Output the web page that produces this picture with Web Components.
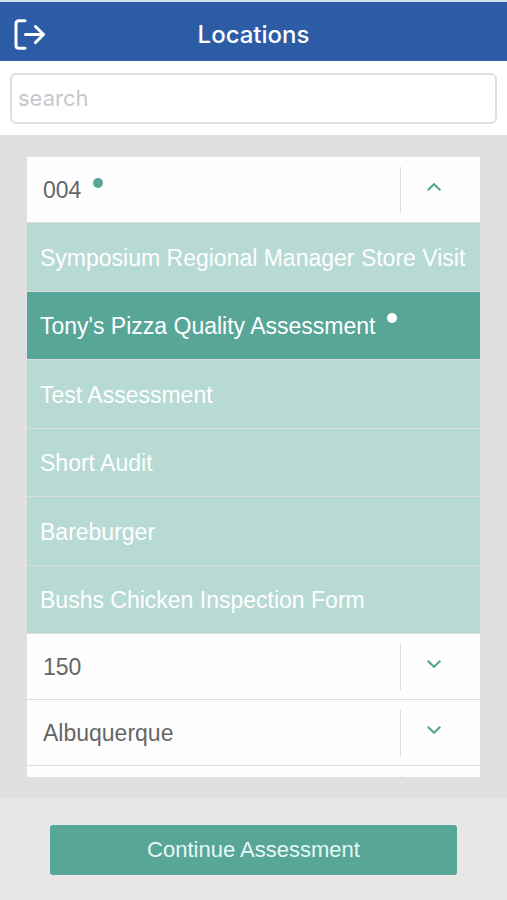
<!DOCTYPE html>
<html lang="en">
<head>
<meta charset="utf-8">
<meta name="viewport" content="width=device-width, initial-scale=1">
<title>Locations</title>
<style>
	body {
		margin: 0;
		font-family: "Liberation Sans", Arial, sans-serif;
		font-size: 23px;
		line-height: 28px;
		--green: #58a698;
		--green-light: #b7dad4;
		--line: #dcdedd;
	}
</style>
</head>
<body>
<location-page>
	<title-bar slot="header">Locations</title-bar>
	<search-box slot="search"></search-box>
	<location-list>
		<location-item open marked>
			<span slot="name">004</span>
			<assessment-item>Symposium Regional Manager Store Visit</assessment-item>
			<assessment-item selected>Tony's Pizza Quality Assessment</assessment-item>
			<assessment-item>Test Assessment</assessment-item>
			<assessment-item>Short Audit</assessment-item>
			<assessment-item>Bareburger</assessment-item>
			<assessment-item>Bushs Chicken Inspection Form</assessment-item>
		</location-item>
		<location-item><span slot="name">150</span></location-item>
		<location-item><span slot="name">Albuquerque</span></location-item>
		<location-item></location-item>
	</location-list>
	<action-button slot="footer">Continue Assessment</action-button>
</location-page>

<script>
(function() {
	function attach(element, html) {
		let template = document.createElement("template");
		template.innerHTML = html;
		let root = element.attachShadow({mode: "open"});
		root.appendChild(template.content.cloneNode(true));
		return root;
	}

	class LocationPage extends HTMLElement {
		constructor() {
			super();
			attach(this, `
				<style>
				:host {
					display: flex;
					flex-direction: column;
					height: 100vh;
					background: #e0e0e0;
				}
				main {
					flex: 1;
					min-height: 0;
					display: flex;
					flex-direction: column;
					padding: 22px 27px;
				}
				footer {
					padding: 26px 50px 25px;
					background: #e7e7e7;
				}
				</style>
				<slot name="header"></slot>
				<slot name="search"></slot>
				<main><slot></slot></main>
				<footer><slot name="footer"></slot></footer>
			`);
		}
	}

	class TitleBar extends HTMLElement {
		constructor() {
			super();
			attach(this, `
				<style>
				:host {
					display: block;
					border-top: 2px solid #d3e0f2;
					background: #2d5ca6;
					color: #fff;
				}
				header {
					display: grid;
					grid-template-columns: 60px 1fr 60px;
					align-items: center;
					padding: 15px 0 8px;
				}
				button {
					display: flex;
					padding: 0 0 0 13px;
					border: 0;
					background: none;
					color: inherit;
				}
				h1 {
					margin: 0;
					font: 500 24px/36px Inter, sans-serif;
					text-align: center;
				}
				</style>
				<header>
					<button type="button" aria-label="Log out">
						<svg width="32" height="32" viewBox="0 0 32 32" fill="none" stroke="currentColor" stroke-width="3" stroke-linecap="round" stroke-linejoin="round">
							<path d="M12 1.7H6Q3 1.7 3 4.7V26.3Q3 29.3 6 29.3H12"/>
							<path d="M12.5 15.5H30.5M22.5 7.5L30.5 15.5L22.5 23.5"/>
						</svg>
					</button>
					<h1><slot></slot></h1>
				</header>
			`);
		}
	}

	class SearchBox extends HTMLElement {
		constructor() {
			super();
			attach(this, `
				<style>
				:host {
					display: block;
					padding: 12px 10px 11px;
					background: #fff;
				}
				input {
					display: block;
					box-sizing: border-box;
					width: 100%;
					height: 51px;
					padding: 0 6px 2px;
					border: 2px solid #dedee0;
					border-radius: 6px;
					background: #fff;
					color: #666;
					font: 22px Inter, sans-serif;
				}
				input::placeholder {
					color: #c8c8cb;
					opacity: 1;
				}
				</style>
				<input type="search" placeholder="search" aria-label="search">
			`);
		}
	}

	class LocationList extends HTMLElement {
		constructor() {
			super();
			attach(this, `
				<style>
				:host {
					display: block;
					flex: 1;
					min-height: 0;
					overflow: hidden;
					background: #fefefe;
				}
				</style>
				<slot></slot>
			`);
		}
	}

	class LocationItem extends HTMLElement {
		constructor() {
			super();
			this._shadowRoot = attach(this, `
				<style>
				:host {
					display: block;
					color: #666;
				}
				.row {
					display: flex;
					align-items: center;
					box-sizing: border-box;
					height: 66px;
					padding: 0 13px 0 16px;
					border-bottom: 1px solid var(--line);
				}
				.name {
					flex: 1;
					display: flex;
				}
				.name::after {
					margin: 2px 0 0 12px;
					width: 10px;
					height: 10px;
					border-radius: 50%;
					background: var(--green);
				}
				:host([marked]) .name::after {
					content: "";
				}
				button {
					display: flex;
					align-items: center;
					justify-content: center;
					box-sizing: border-box;
					width: 67px;
					height: 46px;
					padding: 0 0 6px;
					border: 0;
					border-left: 1px solid var(--line);
					background: none;
					color: var(--green);
				}
				:host([open]) svg {
					transform: scaleY(-1);
				}
				.assessments {
					display: none;
				}
				:host([open]) .assessments {
					display: grid;
					grid-auto-rows: 1fr;
					min-height: 411px;
				}
				</style>
				<div class="row">
					<div class="name"><slot name="name"></slot></div>
					<button type="button" aria-label="Show assessments">
						<svg width="16" height="10" viewBox="0 0 16 10" fill="none" stroke="currentColor" stroke-width="2.2">
							<path d="M1.7 1.7L8 7.8L14.3 1.7"/>
						</svg>
					</button>
				</div>
				<div class="assessments"><slot></slot></div>
			`);
			this._button = this._shadowRoot.querySelector("button");
			this._button.addEventListener("click", this._toggle.bind(this));
		}

		connectedCallback() {
			this._button.setAttribute("aria-expanded", this.hasAttribute("open"));
		}

		_toggle() {
			this.toggleAttribute("open");
			this._button.setAttribute("aria-expanded", this.hasAttribute("open"));
		}
	}

	class AssessmentItem extends HTMLElement {
		constructor() {
			super();
			attach(this, `
				<style>
				:host {
					display: grid;
					border-bottom: 1px solid var(--line);
					background: var(--green-light);
					color: #fff;
				}
				:host([selected]) {
					background: var(--green);
				}
				button {
					display: flex;
					align-items: center;
					padding: 2px 13px 0;
					border: 0;
					background: none;
					color: inherit;
					font: inherit;
					text-align: left;
				}
				.label {
					display: flex;
				}
				.label::after {
					margin: 1px 0 0 12px;
					width: 10px;
					height: 10px;
					border-radius: 50%;
					background: #fff;
				}
				:host([selected]) .label::after {
					content: "";
				}
				</style>
				<button type="button"><span class="label"><slot></slot></span></button>
			`);
		}
	}

	class ActionButton extends HTMLElement {
		constructor() {
			super();
			attach(this, `
				<style>
				:host {
					display: block;
				}
				button {
					display: block;
					width: 100%;
					padding: 11px;
					border: 0;
					border-radius: 3px;
					background: var(--green);
					color: #e4f8f5;
					font: inherit;
					font-size: 22px;
				}
				</style>
				<button type="button"><slot></slot></button>
			`);
		}
	}

	customElements.define("location-page", LocationPage);
	customElements.define("title-bar", TitleBar);
	customElements.define("search-box", SearchBox);
	customElements.define("location-list", LocationList);
	customElements.define("location-item", LocationItem);
	customElements.define("assessment-item", AssessmentItem);
	customElements.define("action-button", ActionButton);
})();
</script>
</body>
</html>
